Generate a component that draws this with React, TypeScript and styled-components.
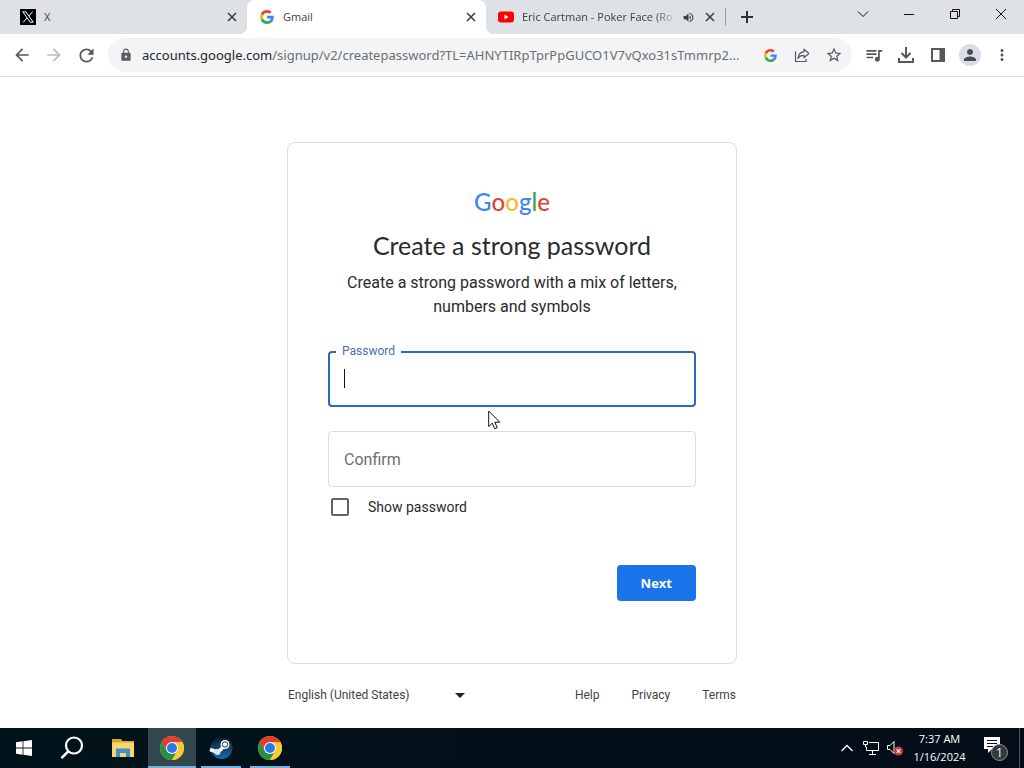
import React, { useState } from "react";
import styled, { createGlobalStyle, css } from "styled-components";
import {
  MdArrowBack,
  MdArrowForward,
  MdRefresh,
  MdLock,
  MdQueueMusic,
  MdStarBorder,
  MdPerson,
  MdMoreVert,
  MdVolumeUp,
} from "react-icons/md";

const uiFont = `"Open Sans", "Noto Sans", sans-serif`;
const pageFont = `Roboto, "Liberation Sans", sans-serif`;

const GlobalStyle = createGlobalStyle`
  *, *::before, *::after { box-sizing: border-box; }
  body { margin: 0; background: #fff; }
  svg { display: block; flex: none; }
  button { border: 0; padding: 0; background: none; color: inherit; font: inherit; }
`;

const Screen = styled.div`
  display: flex;
  flex-direction: column;
  min-height: 100vh;
  font-family: ${uiFont};
`;

/* ---------- browser chrome ---------- */

const TabStrip = styled.header`
  display: flex;
  height: 34px;
  padding-left: 8px;
  background: #dee1e6;
  color: #3c4043;
`;

const Tab = styled.div<{ $active?: boolean }>`
  position: relative;
  display: flex;
  align-items: center;
  flex: 0 1 239px;
  min-width: 0;
  height: 34px;
  padding: 0 7px 0 12px;
  font-size: 11px;
  line-height: 16px;
  ${(p) =>
    p.$active &&
    css`
      background: #fff;
      border-radius: 8px 8px 0 0;
      &::before,
      &::after {
        content: "";
        position: absolute;
        bottom: 0;
        width: 8px;
        height: 8px;
      }
      &::before {
        left: -8px;
        background: radial-gradient(circle at 0 0, transparent 8px, #fff 8px);
      }
      &::after {
        right: -8px;
        background: radial-gradient(circle at 100% 0, transparent 8px, #fff 8px);
      }
    `}
`;

const Favicon = styled.span`
  display: grid;
  place-items: center;
  width: 16px;
  height: 16px;
  margin-right: 8px;
`;

const TabTitle = styled.span<{ $fade?: boolean }>`
  flex: 1;
  min-width: 0;
  overflow: hidden;
  white-space: nowrap;
  ${(p) =>
    p.$fade &&
    css`
      mask-image: linear-gradient(to right, #000 84%, transparent 98%);
    `}
`;

const TabActions = styled.span`
  display: flex;
  gap: 6px;
`;

const TabButton = styled.button`
  display: grid;
  place-items: center;
  width: 16px;
  height: 16px;
`;

const NewTab = styled.button`
  display: grid;
  place-items: center;
  width: 44px;
  height: 34px;
  background: linear-gradient(#9a9da2, #9a9da2) no-repeat left center / 1px 18px;
  color: #303236;
`;

const WindowControls = styled.div`
  display: flex;
  margin-left: auto;
  color: #111;
`;

const WindowButton = styled.button`
  display: grid;
  place-items: center;
  width: 46px;
  height: 28px;
`;

const Toolbar = styled.nav`
  display: flex;
  align-items: center;
  gap: 6px;
  height: 43px;
  padding: 0 6px;
  border-bottom: 1px solid #dcdee1;
  background: #fff;
  color: #5a5d61;
`;

const ToolGroup = styled.div`
  display: flex;
`;

const ToolButton = styled.button<{ $dim?: boolean }>`
  display: grid;
  place-items: center;
  width: 32px;
  height: 32px;
  color: ${(p) => (p.$dim ? "#b9bbbe" : "#55585c")};
`;

const Avatar = styled.span`
  display: grid;
  place-items: center;
  width: 22px;
  height: 22px;
  border-radius: 50%;
  background: #dadde5;
  color: #474b54;
`;

const Omnibox = styled.div`
  display: flex;
  align-items: center;
  flex: 1;
  min-width: 0;
  height: 34px;
  padding: 0 2px 0 11px;
  border-radius: 17px;
  background: #f2f4f5;
`;

const Address = styled.a`
  flex: 1;
  min-width: 0;
  margin-left: 9px;
  overflow: hidden;
  white-space: nowrap;
  text-overflow: ellipsis;
  color: #6b6f73;
  font-family: "Noto Sans", sans-serif;
  font-size: 13px;
  line-height: 20px;
  text-decoration: none;
`;

const Host = styled.span`
  color: #25272a;
`;

/* ---------- page ---------- */

const Page = styled.main`
  display: flex;
  flex-direction: column;
  align-items: center;
  flex: 1;
  padding: 65px 16px 20px;
  font-family: ${pageFont};
  color: #292a2d;
`;

const Card = styled.form`
  position: relative;
  display: flex;
  flex-direction: column;
  width: 100%;
  max-width: 450px;
  padding: 47px 40px 62px;
  border: 1px solid #dadce0;
  border-radius: 8px;
`;

const Wordmark = styled.div`
  display: flex;
  justify-content: center;
  height: 24px;
  font-family: Lato, sans-serif;
  font-size: 24px;
  font-weight: 500;
  line-height: 24px;
`;

const Letter = styled.span<{ $color: string }>`
  color: ${(p) => p.$color};
`;

const Heading = styled.h1`
  margin: 15px 0 10px;
  font-family: Lato, sans-serif;
  font-size: 25px;
  font-weight: 400;
  line-height: 32px;
  text-align: center;
`;

const Intro = styled.p`
  margin: 0 0 32px;
  font-size: 16px;
  line-height: 24px;
  text-align: center;
`;

const Fields = styled.div`
  display: grid;
  gap: 24px;
`;

const Field = styled.div`
  position: relative;
  display: flex;
  height: 56px;
`;

const FieldInput = styled.input<{ $active?: boolean }>`
  width: 100%;
  padding: 0 15px;
  border: ${(p) => (p.$active ? "2px solid #2b68c0" : "1px solid #dadce0")};
  border-radius: 4px;
  outline: 0;
  background: #fff;
  color: inherit;
  font: 16px ${pageFont};
`;

const FieldLabel = styled.label<{ $floating?: boolean }>`
  position: absolute;
  ${(p) =>
    p.$floating
      ? css`
          top: -8px;
          left: 8px;
          padding: 0 6px;
          background: #fff;
          color: #4a6cb8;
          font-size: 12px;
          line-height: 16px;
        `
      : css`
          top: 17px;
          left: 16px;
          color: #6a6d71;
          font-size: 16px;
          line-height: 24px;
        `}
`;

const Caret = styled.span`
  position: absolute;
  top: 18px;
  left: 16px;
  width: 1px;
  height: 19px;
  background: #111;
`;

const CheckLabel = styled.label`
  display: flex;
  align-items: center;
  align-self: flex-start;
  gap: 19px;
  margin-top: 8px;
  padding-left: 3px;
  font-size: 14px;
  line-height: 24px;
`;

const Checkbox = styled.input`
  appearance: none;
  width: 18px;
  height: 18px;
  margin: 0;
  border: 2px solid #5f6368;
  border-radius: 2px;
  &:checked {
    background: #1a73e8;
    border-color: #1a73e8;
  }
`;

const NextButton = styled.button`
  align-self: flex-end;
  height: 36px;
  margin-top: 46px;
  padding: 0 24px;
  border-radius: 4px;
  background: #1a73e8;
  color: #fff;
  font-family: ${uiFont};
  font-size: 13px;
  font-weight: 700;
`;

const Footer = styled.footer`
  display: flex;
  align-items: center;
  justify-content: space-between;
  width: 100%;
  max-width: 450px;
  margin-top: 19px;
  padding: 0 1px;
  color: #3f4246;
  font-size: 12px;
  line-height: 24px;
`;

const Language = styled.div`
  position: relative;
  display: flex;
  align-items: center;
`;

const LanguageSelect = styled.select`
  appearance: none;
  width: 184px;
  height: 24px;
  padding: 0;
  border: 0;
  background: none;
  color: inherit;
  font: 12px ${pageFont};
`;

const SelectArrow = styled.svg`
  position: absolute;
  right: 7px;
  pointer-events: none;
`;

const Links = styled.div`
  display: flex;
  gap: 32px;
`;

const FooterLink = styled.a`
  color: inherit;
  text-decoration: none;
`;

const Pointer = styled.svg`
  position: absolute;
  top: 267px;
  left: 200px;
  pointer-events: none;
`;

/* ---------- taskbar ---------- */

const Taskbar = styled.footer`
  display: flex;
  height: 40px;
  background: linear-gradient(to right, #02141b, #030d18);
  color: #fff;
`;

const TaskGroup = styled.div<{ $gap?: number }>`
  display: flex;
  gap: ${(p) => p.$gap ?? 0}px;
  padding-left: ${(p) => (p.$gap ? 3 : 0)}px;
`;

const TaskButton = styled.button<{ $state?: "active" | "open" }>`
  position: relative;
  display: grid;
  place-items: center;
  width: 48px;
  height: 40px;
  background: ${(p) => (p.$state === "active" ? "#33474e" : "transparent")};
  &::after {
    content: "";
    position: absolute;
    right: ${(p) => (p.$state === "active" ? 0 : 4)}px;
    bottom: 0;
    left: ${(p) => (p.$state === "active" ? 0 : 4)}px;
    height: ${(p) => (p.$state ? 2 : 0)}px;
    background: #76b0dc;
  }
`;

const Tray = styled.div`
  display: flex;
  align-items: center;
  margin-left: auto;
  padding-right: 4px;
`;

const TrayButton = styled.button`
  display: grid;
  place-items: center;
  width: 24px;
  height: 40px;
`;

const Clock = styled.time`
  width: 65px;
  font-size: 11px;
  line-height: 18px;
  text-align: center;
  white-space: nowrap;
`;

const NoticeButton = styled.button`
  display: grid;
  place-items: center;
  width: 48px;
  height: 40px;
  border-right: 1px solid #4a555f;
`;

/* ---------- drawings ---------- */

const GoogleG = ({ size = 14 }: { size?: number }) => (
  <svg width={size} height={size} viewBox="0 0 48 48" aria-hidden="true">
    <path fill="#EA4335" d="M24 9.5c3.54 0 6.71 1.22 9.21 3.6l6.85-6.85C35.9 2.38 30.47 0 24 0 14.62 0 6.51 5.38 2.56 13.22l7.98 6.19C12.43 13.72 17.74 9.5 24 9.5z" />
    <path fill="#4285F4" d="M46.98 24.55c0-1.57-.15-3.09-.38-4.55H24v9.02h12.94c-.58 2.96-2.26 5.48-4.78 7.18l7.73 6c4.51-4.18 7.09-10.36 7.09-17.65z" />
    <path fill="#FBBC05" d="M10.53 28.59c-.48-1.45-.76-2.99-.76-4.59s.27-3.14.76-4.59l-7.98-6.19C.92 16.46 0 20.12 0 24c0 3.88.92 7.54 2.56 10.78l7.97-6.19z" />
    <path fill="#34A853" d="M24 48c6.48 0 11.93-2.13 15.89-5.81l-7.73-6c-2.15 1.45-4.92 2.3-8.16 2.3-6.26 0-11.57-4.22-13.47-9.91l-7.98 6.19C6.51 42.62 14.62 48 24 48z" />
  </svg>
);

const XIcon = () => (
  <svg width="16" height="16" viewBox="0 0 16 16" aria-hidden="true">
    <path fill="#000" d="M0 0h16v16H0z" />
    <path d="M2.8 2.8h3l7.4 10.4h-3z" fill="none" stroke="#fff" />
    <path d="M12.6 2.6 8.8 7M7 9l-3.9 4.4" stroke="#fff" />
  </svg>
);

const YouTubeIcon = () => (
  <svg width="16" height="16" viewBox="0 0 16 16" aria-hidden="true">
    <rect y="2.500" width="16" height="11" rx="3" fill="#f00" />
    <path d="m6.500 5.500 4 2.500-4 2.500z" fill="#fff" />
  </svg>
);

const CloseIcon = () => (
  <svg width="10" height="10" viewBox="0 0 10 10" aria-hidden="true">
    <path d="m1 1 8 8M9 1 1 9" stroke="#3c4043" strokeWidth="1.6" />
  </svg>
);

const ShareIcon = () => (
  <svg width="16" height="16" viewBox="0 0 16 16" fill="none" stroke="currentColor" strokeWidth="1.2" strokeLinejoin="round" aria-hidden="true">
    <path d="M1.500 4.500v10H12V12" />
    <path d="M10 2.200 14.800 6.500 10 10.800V8.300C7 8.300 5.200 9.300 3.900 11.500 4.300 7.800 6.300 5.200 10 4.700z" />
  </svg>
);

const DownloadIcon = () => (
  <svg width="18" height="18" viewBox="0 0 18 18" fill="none" stroke="currentColor" strokeWidth="2" aria-hidden="true">
    <path d="M9 1v10M4.500 7 9 11.500 13.500 7M2 12v4h14v-4" />
  </svg>
);

const PanelIcon = () => (
  <svg width="16" height="16" viewBox="0 0 16 16" aria-hidden="true">
    <path fill="currentColor" fillRule="evenodd" d="M1 1h14v14H1zm2 2v10h6.500V3z" />
  </svg>
);

const ChromeIcon = () => (
  <svg width="24" height="24" viewBox="0 0 24 24" aria-hidden="true">
    <circle cx="12" cy="12" r="12" fill="#fcc934" />
    <path d="M12 6h10.392A12 12 0 0 0 1.608 6L6.804 15z" fill="#e33b2e" />
    <path d="M6.804 15 1.608 6A12 12 0 0 0 12 24l5.196-9z" fill="#229342" />
    <path d="M12 6h10.392A12 12 0 0 1 12 24l5.196-9z" fill="#fcc934" />
    <circle cx="12" cy="12" r="6" fill="#fff" />
    <circle cx="12" cy="12" r="5" fill="#2878e8" />
  </svg>
);

const SteamIcon = () => (
  <svg width="24" height="24" viewBox="0 0 24 24" aria-hidden="true">
    <defs>
      <linearGradient id="steam" x2="0" y2="1">
        <stop stopColor="#0b1730" />
        <stop offset="1" stopColor="#1b6ca6" />
      </linearGradient>
    </defs>
    <circle cx="12.500" cy="12" r="11" fill="url(#steam)" />
    <path d="M1 13.500 8 16l4-2.500 3-4" fill="none" stroke="#fff" strokeWidth="3.500" />
    <circle cx="8.500" cy="16" r="3" fill="#d8e6f0" />
    <circle cx="16" cy="8.500" r="4.500" fill="#fff" />
    <circle cx="16" cy="8.500" r="2.700" fill="#fff" stroke="#17345a" />
  </svg>
);

const FolderIcon = () => (
  <svg width="22" height="18" viewBox="0 0 22 18" aria-hidden="true">
    <path d="M0 0h9l1.500 2H22v3H0z" fill="#d9a52f" />
    <path d="M0 3.500h22V18H0z" fill="#f9d570" />
    <path d="M4 18v-8.500h14V18h-4v-4H8v4z" fill="#3e91c3" />
  </svg>
);

const StartIcon = () => (
  <svg width="16" height="16" viewBox="0 0 16 16" fill="#fff" aria-hidden="true">
    <path d="M0 2.300 6.600 1.300v6.200H0zM7.400 1.200 16 0v7.500H7.400zM0 8.400h6.600v6.300L0 13.700zM7.400 8.400H16V16l-8.600-1.200z" />
  </svg>
);

const SearchIcon = () => (
  <svg width="24" height="24" viewBox="0 0 24 24" fill="none" stroke="#fff" strokeWidth="2.2" aria-hidden="true">
    <circle cx="14" cy="9.500" r="8" />
    <path d="m8.500 15.200-7 7" strokeWidth="2.600" />
  </svg>
);

const NetworkIcon = () => (
  <svg width="16" height="16" viewBox="0 0 16 16" fill="none" stroke="#fff" aria-hidden="true">
    <path d="M6 2.500h9.500v8H3.500V7M9.500 10.500v4M6 14.500h7M.5 1.500h4v3h-4zM2.500 4.500V7h1" />
  </svg>
);

const MutedIcon = () => (
  <svg width="16" height="16" viewBox="0 0 16 16" fill="none" aria-hidden="true">
    <path d="M.5 5.500H3l4-4v12l-4-4H.5z" stroke="#fff" />
    <circle cx="11.500" cy="11" r="4.500" fill="#cf3a3a" />
    <path d="m9.700 9.200 3.600 3.600m0-3.600-3.600 3.600" stroke="#fff" strokeWidth="1.200" />
  </svg>
);

const NoticeIcon = () => (
  <svg width="26" height="26" viewBox="0 0 26 26" aria-hidden="true">
    <path d="M1 2h16v12H9l-4 4v-4H1z" fill="#fff" />
    <path d="M4 5.500h10M4 8.500h10M4 11.500h6" stroke="#06101a" />
    <circle cx="16.500" cy="17.500" r="8" fill="#33383f" stroke="#8d9298" />
    <text x="16.500" y="22" textAnchor="middle" fill="#fff" fontFamily="Open Sans" fontSize="12">1</text>
  </svg>
);

const wordmark = [
  ["G", "#4285f4"],
  ["o", "#dd4436"],
  ["o", "#f6bb1a"],
  ["g", "#4285f4"],
  ["l", "#34a853"],
  ["e", "#e23e37"],
];

export default function App() {
  const [visible, setVisible] = useState(false);
  const type = visible ? "text" : "password";

  return (
    <Screen>
      <GlobalStyle />
      <TabStrip>
        <Tab>
          <Favicon><XIcon /></Favicon>
          <TabTitle>X</TabTitle>
          <TabButton aria-label="Close tab"><CloseIcon /></TabButton>
        </Tab>
        <Tab $active>
          <Favicon><GoogleG size={14} /></Favicon>
          <TabTitle>Gmail</TabTitle>
          <TabButton aria-label="Close tab"><CloseIcon /></TabButton>
        </Tab>
        <Tab>
          <Favicon><YouTubeIcon /></Favicon>
          <TabTitle $fade>Eric Cartman - Poker Face (Ro</TabTitle>
          <TabActions>
            <TabButton aria-label="Mute tab"><MdVolumeUp size={13} /></TabButton>
            <TabButton aria-label="Close tab"><CloseIcon /></TabButton>
          </TabActions>
        </Tab>
        <NewTab aria-label="New tab">
          <svg width="12" height="12" viewBox="0 0 12 12" stroke="currentColor" strokeWidth="2">
            <path d="M6 0v12M0 6h12" />
          </svg>
        </NewTab>
        <WindowControls>
          <WindowButton aria-label="Search tabs">
            <svg width="12" height="12" viewBox="0 0 12 12" fill="none" stroke="currentColor">
              <path d="m1 3.500 5 5 5-5" />
            </svg>
          </WindowButton>
          <WindowButton aria-label="Minimize">
            <svg width="10" height="10" viewBox="0 0 10 10" stroke="currentColor">
              <path d="M0 5.500h10" />
            </svg>
          </WindowButton>
          <WindowButton aria-label="Restore">
            <svg width="10" height="10" viewBox="0 0 10 10" fill="none" stroke="currentColor">
              <path d="M.5 2.500h7v7h-7zM2.500 2.500v-2h7v7h-2" />
            </svg>
          </WindowButton>
          <WindowButton aria-label="Close">
            <svg width="10" height="10" viewBox="0 0 10 10" stroke="currentColor">
              <path d="m0 0 10 10M10 0 0 10" />
            </svg>
          </WindowButton>
        </WindowControls>
      </TabStrip>

      <Toolbar>
        <ToolGroup>
          <ToolButton aria-label="Back"><MdArrowBack size={20} /></ToolButton>
          <ToolButton $dim aria-label="Forward"><MdArrowForward size={20} /></ToolButton>
          <ToolButton aria-label="Reload"><MdRefresh size={21} /></ToolButton>
        </ToolGroup>
        <Omnibox>
          <MdLock size={14} />
          <Address href="#">
            <Host>accounts.google.com</Host>
            /signup/v2/createpassword?TL=AHNYTIRpTprPpGUCO1V7vQxo31sTmmrp2...
          </Address>
          <ToolButton aria-label="Search with Google"><GoogleG size={13} /></ToolButton>
          <ToolButton aria-label="Share"><ShareIcon /></ToolButton>
          <ToolButton aria-label="Bookmark"><MdStarBorder size={18} /></ToolButton>
        </Omnibox>
        <ToolGroup>
          <ToolButton aria-label="Media"><MdQueueMusic size={20} /></ToolButton>
          <ToolButton aria-label="Downloads"><DownloadIcon /></ToolButton>
          <ToolButton aria-label="Side panel"><PanelIcon /></ToolButton>
          <ToolButton aria-label="Profile">
            <Avatar><MdPerson size={18} /></Avatar>
          </ToolButton>
          <ToolButton aria-label="Menu"><MdMoreVert size={18} /></ToolButton>
        </ToolGroup>
      </Toolbar>

      <Page>
        <Card onSubmit={(e) => e.preventDefault()}>
          <Wordmark>
            {wordmark.map(([letter, color], i) => (
              <Letter key={i} $color={color}>{letter}</Letter>
            ))}
          </Wordmark>
          <Heading>Create a strong password</Heading>
          <Intro>Create a strong password with a mix of letters, numbers and symbols</Intro>
          <Fields>
            <Field>
              <FieldInput $active id="password" type={type} />
              <FieldLabel $floating htmlFor="password">Password</FieldLabel>
              <Caret />
            </Field>
            <Field>
              <FieldInput id="confirm" type={type} />
              <FieldLabel htmlFor="confirm">Confirm</FieldLabel>
            </Field>
          </Fields>
          <CheckLabel>
            <Checkbox type="checkbox" checked={visible} onChange={(e) => setVisible(e.target.checked)} />
            Show password
          </CheckLabel>
          <NextButton type="submit">Next</NextButton>
          <Pointer width="13" height="20" viewBox="0 0 13 20" aria-hidden="true">
            <path d="M.7 1v15.500l3.600-3.400 2.500 5.700 2.500-1.100-2.500-5.500h5z" fill="#fff" stroke="#111" />
          </Pointer>
        </Card>
        <Footer>
          <Language>
            <LanguageSelect aria-label="Language">
              <option>English (United States)</option>
            </LanguageSelect>
            <SelectArrow width="10" height="5" viewBox="0 0 10 5" aria-hidden="true">
              <path d="M0 0h10L5 5z" fill="#202124" />
            </SelectArrow>
          </Language>
          <Links>
            <FooterLink href="#">Help</FooterLink>
            <FooterLink href="#">Privacy</FooterLink>
            <FooterLink href="#">Terms</FooterLink>
          </Links>
        </Footer>
      </Page>

      <Taskbar>
        <TaskGroup>
          <TaskButton aria-label="Start"><StartIcon /></TaskButton>
          <TaskButton aria-label="Search"><SearchIcon /></TaskButton>
        </TaskGroup>
        <TaskGroup $gap={1}>
          <TaskButton aria-label="File Explorer"><FolderIcon /></TaskButton>
          <TaskButton $state="active" aria-label="Chrome"><ChromeIcon /></TaskButton>
          <TaskButton $state="open" aria-label="Steam"><SteamIcon /></TaskButton>
          <TaskButton $state="open" aria-label="Chrome"><ChromeIcon /></TaskButton>
        </TaskGroup>
        <Tray>
          <TrayButton aria-label="Show hidden icons">
            <svg width="12" height="8" viewBox="0 0 12 8" fill="none" stroke="#fff" strokeWidth="1.300">
              <path d="m.5 7 5.500-5.500L11.500 7" />
            </svg>
          </TrayButton>
          <TrayButton aria-label="Network"><NetworkIcon /></TrayButton>
          <TrayButton aria-label="Volume"><MutedIcon /></TrayButton>
          <Clock>7:37 AM<br />1/16/2024</Clock>
          <NoticeButton aria-label="Notifications"><NoticeIcon /></NoticeButton>
        </Tray>
      </Taskbar>
    </Screen>
  );
}
